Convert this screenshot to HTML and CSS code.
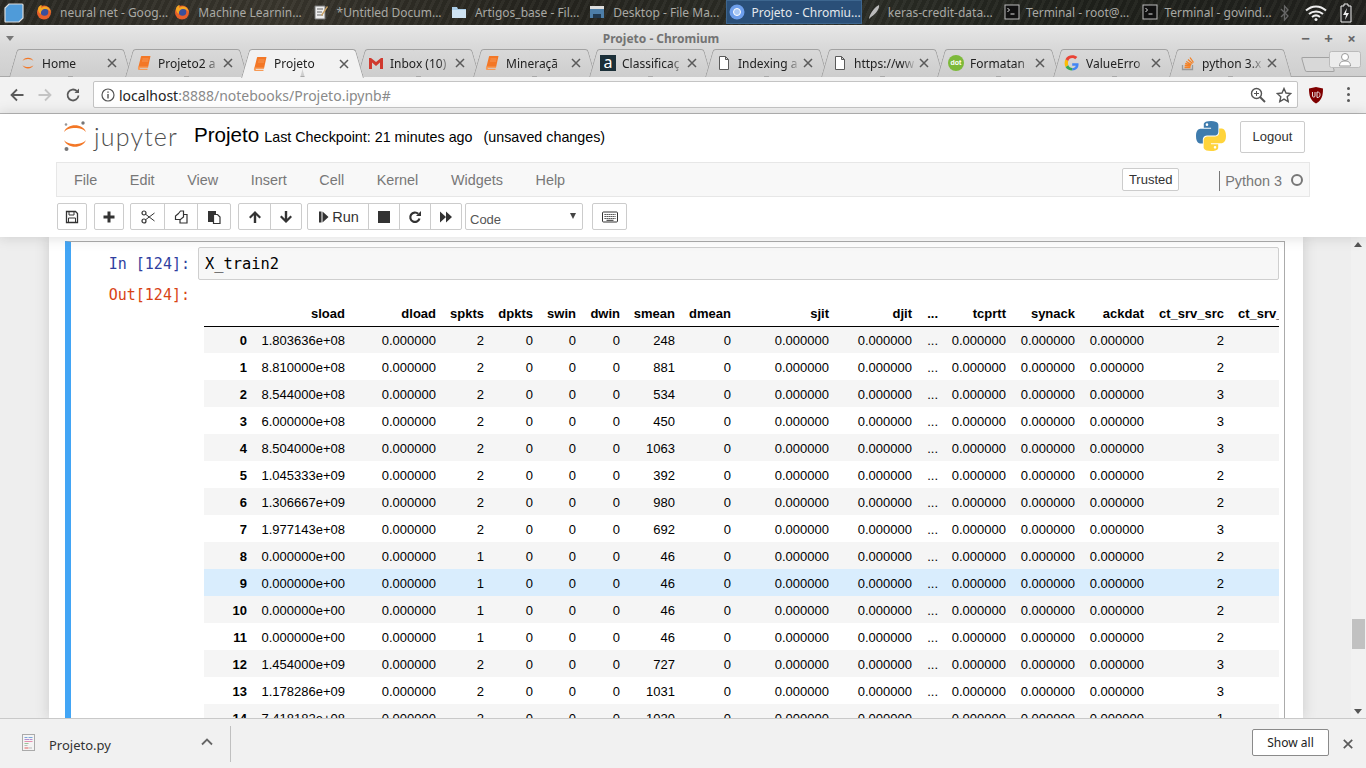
FILE: index.html
```html
<!DOCTYPE html>
<html>
<head>
  <meta charset="utf-8">
  <title>Projeto - Chromium</title>
  <link rel="stylesheet" href="styles.css">
</head>
<body>
  <svg class="defs" width="0" height="0">
    <symbol id="firefox" viewBox="0 0 16 16"><circle cx="8" cy="8.500" r="7" fill="#e8602a"/><circle cx="8.500" cy="8" r="3.800" fill="#3a4f9c"/><path d="M2 5c0-2 2-4 4-4-1 1-1 2-.5 3 1-1.500 4-2 6-1 2 1 3 3 3 5-1-2-3-3-5-3-3 0-5 2-4.500 5C3 9.500 2 7 2 5z" fill="#f5a623"/></symbol>
    <symbol id="term" viewBox="0 0 16 16"><rect x="1" y="1" width="14" height="14" fill="#111" stroke="#bbb"/><path d="M3.500 4l2 2-2 2M6.500 10h4" fill="none" stroke="#ddd"/></symbol>
    <symbol id="book" viewBox="0 0 16 16"><path d="M5 1.500c0-.3.300-.5.500-.5h9l-2.500 11.500H3.500C2.500 12.500 2 13 2 13.500z" fill="#f37726"/><path d="M2 12.500c0-.5.500-1 1.500-1H12l-.3 1.300H4.300c-.6 0-.8 1-.2 1h7.500l-.2 1.200H3c-1 0-1.300-1.500-1-2.500z" fill="#f79a55"/><path d="M6.500 4h6M6 6h6" stroke="#f9a66b" stroke-width=".7"/></symbol>
    <symbol id="page" viewBox="0 0 16 16"><path d="M3.500 1.500h6l3 3v10h-9zM9.500 1.500v3h3" fill="#fff" stroke="#5a5a5a"/></symbol>
    <symbol id="arcs" viewBox="0 0 32 32"><path d="M5 12C8 3 24 3 27 12 23 6.500 9 6.500 5 12z" fill="#f37726"/><path d="M5 20c3 9 19 9 22 0-4 5.500-18 5.500-22 0z" fill="#f37726"/></symbol>
    <symbol id="close" viewBox="0 0 10 10"><path d="M1 1l8 8M9 1L1 9" stroke="#5a5a5a" stroke-width="1.500" fill="none"/></symbol>
  </svg>

  <div class="taskbar">
    <svg class="launcher" viewBox="0 0 22 22"><path d="M6 2h13c1 0 1 0 1 1v13l-4 4H3c-1 0-1 0-1-1V6z" fill="#4f9bd9" stroke="#dcdcdc" stroke-width="1.200"/></svg>
    <div class="task-list">
      <div class="task"><svg class="task-icon"><use href="#firefox"/></svg><span>neural net - Goog...</span></div>
      <div class="task"><svg class="task-icon"><use href="#firefox"/></svg><span>Machine Learnin...</span></div>
      <div class="task"><svg class="task-icon" viewBox="0 0 16 16"><path d="M2 2h10v13H2z" fill="#eee" stroke="#777"/><path d="M4 5h6M4 8h5M4 11h6" stroke="#666"/><path d="M8 11l6-9 1 1-6 9z" fill="#c8a060"/></svg><span>*Untitled Docum...</span></div>
      <div class="task"><svg class="task-icon" viewBox="0 0 16 16"><path d="M1 3h5l1 2h8v9H1z" fill="#a9cbe6"/><path d="M1 6h14v8H1z" fill="#cfe3f2"/></svg><span>Artigos_base - Fil...</span></div>
      <div class="task"><svg class="task-icon" viewBox="0 0 16 16"><rect x="1" y="2" width="14" height="12" fill="#4d7ea8"/><rect x="1" y="2" width="14" height="3" fill="#ddd"/><rect x="4" y="10" width="8" height="4" fill="#20384e"/></svg><span>Desktop - File Ma...</span></div>
      <div class="task task-active"><svg class="task-icon" viewBox="0 0 16 16"><circle cx="8" cy="8" r="7.500" fill="#6d9eeb"/><circle cx="8" cy="8" r="3.500" fill="#a9c8f5" stroke="#fff"/></svg><span>Projeto - Chromiu...</span></div>
      <div class="task task-tight"><svg class="task-icon" viewBox="0 0 16 16"><path d="M13 1c1 3-3 9-8 12l-2 2c0-3 4-11 10-14z" fill="#bbb"/></svg><span>keras-credit-data...</span></div>
      <div class="task task-tight"><svg class="task-icon"><use href="#term"/></svg><span>Terminal - root@...</span></div>
      <div class="task task-tight"><svg class="task-icon"><use href="#term"/></svg><span>Terminal - govind...</span></div>
    </div>
    <div class="tray">
      <svg class="tray-bt" viewBox="0 0 10 18"><path d="M1 5l7 7-3.500 4V2L8 6l-7 7" fill="none" stroke="#666" stroke-width="1.300"/></svg>
      <svg class="tray-wifi" viewBox="0 0 22 16"><path d="M1 5.500c6-5.500 14-5.500 20 0M4 9c4-3.500 10-3.500 14 0M7 12c2.500-2 5.500-2 8 0" fill="none" stroke="#eee" stroke-width="2"/><circle cx="11" cy="14.500" r="1.500" fill="#eee"/></svg>
      <svg class="tray-bat" viewBox="0 0 12 20"><path d="M4 1h4v2h3v16H1V3h3z" fill="#222" stroke="#eee"/><path d="M7 5L3 12h3l-1 5 4-7H6z" fill="#eee"/></svg>
    </div>
  </div>

  <div class="browser-top">
    <div class="titlebar">
      <span class="win-menu"></span>
      <span class="win-title">Projeto - Chromium</span>
      <div class="win-controls"><span>&minus;</span><span>+</span><span>&times;</span></div>
    </div>
    <div class="tabstrip">
      <div class="tab"><svg class="tab-icon"><use href="#arcs"/></svg><span class="tab-text">Home</span><svg class="tab-close"><use href="#close"/></svg></div>
      <div class="tab"><svg class="tab-icon"><use href="#book"/></svg><span class="tab-text">Projeto2 a</span><svg class="tab-close"><use href="#close"/></svg></div>
      <div class="tab tab-active"><svg class="tab-icon"><use href="#book"/></svg><span class="tab-text">Projeto</span><svg class="tab-close"><use href="#close"/></svg></div>
      <div class="tab"><svg class="tab-icon" viewBox="0 0 16 16"><path d="M1 3h2l5 4 5-4h2v11h-3V7.500L8 11 4 7.500V14H1z" fill="#d0392e"/></svg><span class="tab-text">Inbox (10)</span><svg class="tab-close"><use href="#close"/></svg></div>
      <div class="tab"><svg class="tab-icon"><use href="#book"/></svg><span class="tab-text">Mineraçã</span><svg class="tab-close"><use href="#close"/></svg></div>
      <div class="tab"><span class="tab-icon icon-a">a</span><span class="tab-text">Classificaç</span><svg class="tab-close"><use href="#close"/></svg></div>
      <div class="tab"><svg class="tab-icon"><use href="#page"/></svg><span class="tab-text">Indexing a</span><svg class="tab-close"><use href="#close"/></svg></div>
      <div class="tab"><svg class="tab-icon"><use href="#page"/></svg><span class="tab-text">https://ww</span><svg class="tab-close"><use href="#close"/></svg></div>
      <div class="tab"><span class="tab-icon icon-dot">dot</span><span class="tab-text">Formatan</span><svg class="tab-close"><use href="#close"/></svg></div>
      <div class="tab"><svg class="tab-icon" viewBox="0 0 16 16"><path d="M14.500 8.200H8.200v2.500h3.600c-.5 1.500-1.800 2.300-3.600 2.300V15.500c2 0 3.700-.7 4.900-1.900 1.200-1.300 1.600-3.200 1.400-5.400z" fill="#4285f4"/><path d="M8.200 13c-2 0-3.400-1.200-4-2.900L1.500 12c1.200 2.200 3.700 3.500 6.700 3.500z" fill="#34a853"/><path d="M4.200 10.100c-.4-1.300-.4-2.700 0-4L1.500 4.200c-1.200 2.400-1.200 5.400 0 7.800z" fill="#fbbc05"/><path d="M8.200 3c1.200 0 2.200.4 3 1.200l2.100-2.100C12 .9 10.200.3 8.200.3 5.200.3 2.700 1.800 1.500 4.200l2.700 1.900C4.800 4.300 6.300 3 8.200 3z" fill="#ea4335"/></svg><span class="tab-text">ValueErro</span><svg class="tab-close"><use href="#close"/></svg></div>
      <div class="tab"><svg class="tab-icon" viewBox="0 0 16 16"><path d="M2.500 10v4.500h10V10" fill="none" stroke="#999" stroke-width="1.300"/><path d="M4.500 12.500h6M4.700 10.500l6 .5M5.200 8.500l5.800 1.500M6.200 6.500l5.300 3M8 4.500l4.500 4M10 2.500l3.500 5" stroke="#f48024" stroke-width="1.300"/></svg><span class="tab-text">python 3.x</span><svg class="tab-close"><use href="#close"/></svg></div>
      <div class="newtab"></div>
      <svg class="profile" viewBox="0 0 32 17"><rect x=".5" y=".5" width="31" height="16" rx="2" fill="#ececec" stroke="#bbb"/><circle cx="16" cy="6" r="3.500" fill="#fff" stroke="#999"/><path d="M10.500 15c0-4 2.500-5 5.500-5s5.500 1 5.500 5z" fill="#fff" stroke="#999"/></svg>
    </div>
    <div class="navbar">
      <svg class="nav-btn" viewBox="0 0 16 16"><path d="M14.500 8H2.500M8 2.500L2.500 8 8 13.500" fill="none" stroke="#5a5a5a" stroke-width="1.800"/></svg>
      <svg class="nav-btn" viewBox="0 0 16 16"><path d="M1.500 8h12M8 2.500L13.500 8 8 13.500" fill="none" stroke="#c4c4c4" stroke-width="1.800"/></svg>
      <svg class="nav-btn" viewBox="0 0 16 16"><path d="M13.500 8.500A5.500 5.500 0 1 1 11.800 4" fill="none" stroke="#5a5a5a" stroke-width="1.800"/><path d="M9.500 6H14V1.500z" fill="#5a5a5a"/></svg>
      <div class="omnibox">
        <svg class="info" viewBox="0 0 14 14"><circle cx="7" cy="7" r="6" fill="none" stroke="#555" stroke-width="1.200"/><path d="M7 6v4.500M7 3.500v1.300" stroke="#555" stroke-width="1.400"/></svg>
        <span class="url"><span class="url-host">localhost</span>:8888/notebooks/Projeto.ipynb#</span>
        <svg class="omni-icon" viewBox="0 0 16 16"><circle cx="6.500" cy="6.500" r="5" fill="none" stroke="#555" stroke-width="1.400"/><path d="M10 10l5 5" stroke="#555" stroke-width="2"/><path d="M4 6.500h5M6.500 4v5" stroke="#555"/></svg>
        <svg class="omni-icon" viewBox="0 0 16 16"><path d="M8 1.500l2 4.500 4.800.5-3.600 3.200 1 4.800L8 12.100l-4.200 2.400 1-4.800L1.200 6.500 6 6z" fill="none" stroke="#555" stroke-width="1.400"/></svg>
      </div>
      <svg class="ublock" viewBox="0 0 16 18"><path d="M1 2.500L8 1l7 1.500c0 7-1 11.500-7 15-6-3.500-7-8-7-15z" fill="#800000"/><path d="M4.500 6v4c0 1.500 2.500 1.500 2.500 0V6M9 6v5.500c2.500 0 3-1 3-2.700S11.500 6 9 6z" fill="none" stroke="#e8dcdc"/></svg>
      <div class="kebab"><i></i><i></i><i></i></div>
    </div>
  </div>

  <div class="jp-top">
    <div class="jp-header">
      <svg class="jp-logo" viewBox="0 0 26 32"><use href="#arcs" x="-3" y="0" width="32" height="32"/><circle cx="21" cy="3" r="1.700" fill="#767677"/><circle cx="4" cy="4.500" r="1.300" fill="#989798"/><circle cx="4.500" cy="29" r="2" fill="#767677"/></svg>
      <span class="jp-word">jupyter</span>
      <span class="nb-name">Projeto</span>
      <span class="nb-check">Last Checkpoint: 21 minutes ago</span>
      <span class="nb-unsaved">(unsaved changes)</span>
      <svg class="py-logo" viewBox="0 0 110 110"><path d="M54.900 0C26.900 0 28.600 12.200 28.600 12.200v12.600h26.700v3.800H18S0 26.500 0 54.900c0 28.400 15.700 27.400 15.700 27.400h9.400V69.100s-.5-15.700 15.400-15.700h26.600s14.900.2 14.900-14.400V14.800S84.300 0 54.900 0zM40.200 8.500a4.800 4.800 0 1 1 0 9.600 4.800 4.800 0 0 1 0-9.600z" fill="#3f7cad"/><path transform="rotate(180 55 55)" d="M54.900 0C26.900 0 28.600 12.200 28.600 12.200v12.600h26.700v3.800H18S0 26.500 0 54.900c0 28.400 15.700 27.400 15.700 27.400h9.400V69.100s-.5-15.700 15.400-15.700h26.600s14.900.2 14.900-14.400V14.800S84.300 0 54.900 0zM40.200 8.500a4.800 4.800 0 1 1 0 9.600 4.800 4.800 0 0 1 0-9.600z" fill="#ffd43b"/></svg>
      <div class="logout">Logout</div>
    </div>
    <div class="jp-menubar">
      <span class="menu-item">File</span>
      <span class="menu-item">Edit</span>
      <span class="menu-item">View</span>
      <span class="menu-item">Insert</span>
      <span class="menu-item">Cell</span>
      <span class="menu-item">Kernel</span>
      <span class="menu-item">Widgets</span>
      <span class="menu-item">Help</span>
      <span class="trusted">Trusted</span>
      <span class="kernel-name">Python 3</span>
      <span class="kernel-dot"></span>
    </div>
    <div class="jp-toolbar">
      <div class="btn-group">
        <div class="tb-btn"><svg viewBox="0 0 14 14"><path d="M1.500 1.500h9l2 2v9h-11z" fill="none" stroke="#333" stroke-width="1.300"/><path d="M4 1.500h5v3.500H4zM3.500 8h7v4.500h-7z" fill="none" stroke="#333"/></svg></div>
      </div>
      <div class="btn-group group-plus">
        <div class="tb-btn"><svg viewBox="0 0 14 14"><path d="M7 1.500v11M1.500 7h11" stroke="#333" stroke-width="3"/></svg></div>
      </div>
      <div class="btn-group">
        <div class="tb-btn tb-wide"><svg viewBox="0 0 14 14"><circle cx="3" cy="3" r="2" fill="none" stroke="#333" stroke-width="1.200"/><circle cx="3" cy="11" r="2" fill="none" stroke="#333" stroke-width="1.200"/><path d="M4.500 4.200L13.500 11M4.500 9.800L13.500 3" stroke="#333"/></svg></div>
        <div class="tb-btn tb-wide"><svg viewBox="0 0 14 14"><path d="M4.500 3.500l2-2.500h3v6l-3 2.500h-5V6z" fill="none" stroke="#333" stroke-width="1.200"/><path d="M9 4.500h4v8.500H6V9.500" fill="none" stroke="#333" stroke-width="1.200"/></svg></div>
        <div class="tb-btn tb-wide"><svg viewBox="0 0 14 14"><path d="M1 1h8v3H6v8H1z" fill="#333"/><path d="M6.500 4.500h4l2.500 2.500v6.500H6.500z" fill="#fff" stroke="#333" stroke-width="1.200"/></svg></div>
      </div>
      <div class="btn-group group-move">
        <div class="tb-btn tb-mid"><svg viewBox="0 0 14 14"><path d="M7 1l6 6-1.500 1.500L8.200 5.200V13H5.800V5.200L2.500 8.500 1 7z" fill="#333"/></svg></div>
        <div class="tb-btn tb-mid"><svg viewBox="0 0 14 14"><path d="M7 13L1 7l1.500-1.500 3.300 3.300V1h2.400v7.800l3.300-3.300L13 7z" fill="#333"/></svg></div>
      </div>
      <div class="btn-group group-run">
        <div class="tb-btn tb-run"><svg viewBox="0 0 14 14"><path d="M2 1.500h2.500v11H2zM5.500 1.500l6 5.500-6 5.500z" fill="#333"/></svg><span>Run</span></div>
        <div class="tb-btn tb-mid"><svg viewBox="0 0 14 14"><rect x="1" y="1" width="12" height="12" fill="#333"/></svg></div>
        <div class="tb-btn tb-mid"><svg viewBox="0 0 14 14"><path d="M11.500 8.500a4.700 4.700 0 1 1-1.300-4.700" fill="none" stroke="#333" stroke-width="2.200"/><path d="M8 6h5V1z" fill="#333"/></svg></div>
        <div class="tb-btn tb-mid"><svg viewBox="0 0 14 14"><path d="M1 1.500l6 5.500-6 5.500zM7 1.500l6 5.500-6 5.500z" fill="#333"/></svg></div>
      </div>
      <div class="cell-type">Code<span class="caret"></span></div>
      <div class="btn-group">
        <div class="tb-btn tb-kbd"><svg viewBox="0 0 16 12"><rect x=".5" y="1" width="15" height="10" rx="1" fill="none" stroke="#333"/><path d="M2.500 3.500h11M2.500 5.500h11M2.500 7.500h11" stroke="#333" stroke-dasharray="1.300 .7"/><path d="M4.500 9.300h7" stroke="#333"/></svg></div>
      </div>
    </div>
  </div>

  <div class="site">
    <div class="notebook">
      <div class="cell">
        <div class="input-row">
          <div class="prompt prompt-in">In [124]:</div>
          <div class="input-box">X_train2</div>
        </div>
        <div class="output-row">
          <div class="prompt prompt-out">Out[124]:</div>
          <div class="df-wrap">
            <table class="df">
              <colgroup>
                <col class="w49"><col class="w98"><col class="w91"><col class="w48"><col class="w49"><col class="w43"><col class="w44"><col class="w55"><col class="w56"><col class="w98"><col class="w83"><col class="w26"><col class="w68"><col class="w69"><col class="w69"><col class="w80"><col class="w79">
              </colgroup>
              <thead>
                <tr><th></th><th>sload</th><th>dload</th><th>spkts</th><th>dpkts</th><th>swin</th><th>dwin</th><th>smean</th><th>dmean</th><th>sjit</th><th>djit</th><th>...</th><th>tcprtt</th><th>synack</th><th>ackdat</th><th>ct_srv_src</th><th>ct_srv_dst</th></tr>
              </thead>
              <tbody>
                <tr><th>0</th><td>1.803636e+08</td><td>0.000000</td><td>2</td><td>0</td><td>0</td><td>0</td><td>248</td><td>0</td><td>0.000000</td><td>0.000000</td><td>...</td><td>0.000000</td><td>0.000000</td><td>0.000000</td><td>2</td><td></td></tr>
                <tr><th>1</th><td>8.810000e+08</td><td>0.000000</td><td>2</td><td>0</td><td>0</td><td>0</td><td>881</td><td>0</td><td>0.000000</td><td>0.000000</td><td>...</td><td>0.000000</td><td>0.000000</td><td>0.000000</td><td>2</td><td></td></tr>
                <tr><th>2</th><td>8.544000e+08</td><td>0.000000</td><td>2</td><td>0</td><td>0</td><td>0</td><td>534</td><td>0</td><td>0.000000</td><td>0.000000</td><td>...</td><td>0.000000</td><td>0.000000</td><td>0.000000</td><td>3</td><td></td></tr>
                <tr><th>3</th><td>6.000000e+08</td><td>0.000000</td><td>2</td><td>0</td><td>0</td><td>0</td><td>450</td><td>0</td><td>0.000000</td><td>0.000000</td><td>...</td><td>0.000000</td><td>0.000000</td><td>0.000000</td><td>3</td><td></td></tr>
                <tr><th>4</th><td>8.504000e+08</td><td>0.000000</td><td>2</td><td>0</td><td>0</td><td>0</td><td>1063</td><td>0</td><td>0.000000</td><td>0.000000</td><td>...</td><td>0.000000</td><td>0.000000</td><td>0.000000</td><td>3</td><td></td></tr>
                <tr><th>5</th><td>1.045333e+09</td><td>0.000000</td><td>2</td><td>0</td><td>0</td><td>0</td><td>392</td><td>0</td><td>0.000000</td><td>0.000000</td><td>...</td><td>0.000000</td><td>0.000000</td><td>0.000000</td><td>2</td><td></td></tr>
                <tr><th>6</th><td>1.306667e+09</td><td>0.000000</td><td>2</td><td>0</td><td>0</td><td>0</td><td>980</td><td>0</td><td>0.000000</td><td>0.000000</td><td>...</td><td>0.000000</td><td>0.000000</td><td>0.000000</td><td>2</td><td></td></tr>
                <tr><th>7</th><td>1.977143e+08</td><td>0.000000</td><td>2</td><td>0</td><td>0</td><td>0</td><td>692</td><td>0</td><td>0.000000</td><td>0.000000</td><td>...</td><td>0.000000</td><td>0.000000</td><td>0.000000</td><td>3</td><td></td></tr>
                <tr><th>8</th><td>0.000000e+00</td><td>0.000000</td><td>1</td><td>0</td><td>0</td><td>0</td><td>46</td><td>0</td><td>0.000000</td><td>0.000000</td><td>...</td><td>0.000000</td><td>0.000000</td><td>0.000000</td><td>2</td><td></td></tr>
                <tr class="row-hover"><th>9</th><td>0.000000e+00</td><td>0.000000</td><td>1</td><td>0</td><td>0</td><td>0</td><td>46</td><td>0</td><td>0.000000</td><td>0.000000</td><td>...</td><td>0.000000</td><td>0.000000</td><td>0.000000</td><td>2</td><td></td></tr>
                <tr><th>10</th><td>0.000000e+00</td><td>0.000000</td><td>1</td><td>0</td><td>0</td><td>0</td><td>46</td><td>0</td><td>0.000000</td><td>0.000000</td><td>...</td><td>0.000000</td><td>0.000000</td><td>0.000000</td><td>2</td><td></td></tr>
                <tr><th>11</th><td>0.000000e+00</td><td>0.000000</td><td>1</td><td>0</td><td>0</td><td>0</td><td>46</td><td>0</td><td>0.000000</td><td>0.000000</td><td>...</td><td>0.000000</td><td>0.000000</td><td>0.000000</td><td>2</td><td></td></tr>
                <tr><th>12</th><td>1.454000e+09</td><td>0.000000</td><td>2</td><td>0</td><td>0</td><td>0</td><td>727</td><td>0</td><td>0.000000</td><td>0.000000</td><td>...</td><td>0.000000</td><td>0.000000</td><td>0.000000</td><td>3</td><td></td></tr>
                <tr><th>13</th><td>1.178286e+09</td><td>0.000000</td><td>2</td><td>0</td><td>0</td><td>0</td><td>1031</td><td>0</td><td>0.000000</td><td>0.000000</td><td>...</td><td>0.000000</td><td>0.000000</td><td>0.000000</td><td>3</td><td></td></tr>
                <tr><th>14</th><td>7.418182e+08</td><td>0.000000</td><td>2</td><td>0</td><td>0</td><td>0</td><td>1020</td><td>0</td><td>0.000000</td><td>0.000000</td><td>...</td><td>0.000000</td><td>0.000000</td><td>0.000000</td><td>1</td><td></td></tr>
              </tbody>
            </table>
          </div>
        </div>
      </div>
    </div>
    <div class="scrollbar">
      <span class="sb-up"></span>
      <span class="sb-thumb"></span>
      <span class="sb-down"></span>
    </div>
  </div>

  <div class="downloads">
    <svg class="dl-file" viewBox="0 0 13 17"><rect x=".5" y=".5" width="12" height="16" fill="#f4f4f4" stroke="#aaa"/><path d="M2.500 3.500h3M6.500 3.500h4" stroke="#7aa7d9"/><path d="M2.500 5.500h5M8 5.500h2.500" stroke="#b08fd0"/><path d="M2.500 7.500h8" stroke="#e58fb0"/><path d="M2.500 9.500h4" stroke="#9ac49a"/><path d="M2.500 11.500h3" stroke="#bbb"/><path d="M2.500 14h4" stroke="#e06060"/><path d="M7 14h3" stroke="#bbb"/></svg>
    <span class="dl-name">Projeto.py</span>
    <svg class="dl-chevron" viewBox="0 0 12 8"><path d="M1 6.500l5-5 5 5" fill="none" stroke="#666" stroke-width="1.800"/></svg>
    <span class="dl-sep"></span>
    <div class="show-all">Show all</div>
    <svg class="dl-close" viewBox="0 0 10 10"><path d="M.8.800l8.400 8.400M9.200.800L.8 9.200" stroke="#5a5a5a" stroke-width="1.700"/></svg>
  </div>
</body>
</html>
```

FILE: styles.css
```css
* {
  box-sizing: border-box;
}

html, body {
  margin: 0;
  height: 100%;
}

body {
  width: 1366px;
  height: 768px;
  overflow: hidden;
  display: flex;
  flex-direction: column;
  font-family: "Liberation Sans", Arial, sans-serif;
  background: #eee;
}

.defs {
  position: absolute;
}

/* Desktop panel */
.taskbar {
  height: 25px;
  flex: none;
  display: flex;
  align-items: center;
  padding-left: 3px;
  background:
    repeating-linear-gradient(115deg, rgba(255, 255, 255, 0.03) 0 3px, rgba(0, 0, 0, 0.08) 3px 7px),
    linear-gradient(90deg, #2b2a24, #3a372e 20%, #26251f 40%, #2e3029 60%, #20221c 80%, #23231f);
  font-family: "Noto Sans", sans-serif;
  font-size: 12px;
  color: #a9a9a4;
}

.launcher {
  width: 22px;
  height: 22px;
  flex: none;
}

.task-list {
  display: flex;
  margin-left: 10px;
  height: 25px;
}

.task {
  width: 136px;
  margin-right: 2.300px;
  height: 24px;
  padding-left: 1px;
  display: flex;
  align-items: center;
  gap: 8px;
  white-space: nowrap;
}

.task-active {
  background: #2a4f78;
  border: 1px solid #3d668f;
  color: #e4e8ec;
  padding-left: 2px;
  gap: 6px;
}

.task-tight {
  gap: 6px;
}

.task-icon {
  width: 16px;
  height: 16px;
  flex: none;
}

.tray {
  margin-left: auto;
  display: flex;
  align-items: center;
  height: 25px;
  padding-right: 14px;
}

.tray-bt {
  width: 10px;
  height: 18px;
  margin-right: 15px;
}

.tray-wifi {
  width: 22px;
  height: 16px;
  margin-right: 13px;
}

.tray-bat {
  width: 12px;
  height: 20px;
}

/* Browser chrome */
.browser-top {
  flex: none;
  font-family: "Noto Sans", sans-serif;
}

.titlebar {
  height: 24px;
  position: relative;
  display: flex;
  align-items: center;
  justify-content: center;
  padding: 2px 44px 0 0;
  background: linear-gradient(#e6e6e6, #d8d8d8);
  border-top: 1px solid #efefef;
}

.win-menu {
  position: absolute;
  left: 6px;
  top: 10px;
  border-left: 4px solid transparent;
  border-right: 4px solid transparent;
  border-top: 5px solid #777;
}

.win-title {
  font-size: 12px;
  font-weight: 700;
  color: #737373;
}

.win-controls {
  position: absolute;
  right: 3px;
  top: 2px;
  display: flex;
  color: #666;
  font-size: 15px;
  line-height: 20px;
  font-weight: 700;
}

.win-controls span {
  width: 23px;
  text-align: center;
}

.tabstrip {
  height: 28px;
  display: flex;
  padding-left: 13px;
  position: relative;
  background: linear-gradient(#d8d8d8, #cfcfcf);
  border-bottom: 1px solid #a9a9a9;
}

.tab {
  width: 116px;
  height: 28px;
  flex: none;
  position: relative;
  z-index: 1;
  display: flex;
  align-items: center;
  padding-left: 7px;
  font-size: 12px;
  color: #222;
}

.tab::before,
.tab::after {
  content: "";
  position: absolute;
  top: 0;
  bottom: 0;
  width: 50%;
  z-index: -1;
  background: linear-gradient(#d9d9d9, #cdcdcd);
  border-top: 1px solid #a2a2a2;
}

.tab::before {
  left: -4px;
  border-left: 1px solid #a2a2a2;
  border-top-left-radius: 3px;
  transform: skewX(-16deg);
  transform-origin: bottom left;
}

.tab::after {
  right: -3px;
  border-right: 1px solid #a2a2a2;
  border-top-right-radius: 3px;
  transform: skewX(16deg);
  transform-origin: bottom right;
}

.tab-active {
  z-index: 2;
  height: 29px;
  margin-bottom: -1px;
}

.tab-active::before,
.tab-active::after {
  background: #f2f2f2;
}

.tab-icon {
  width: 16px;
  height: 16px;
  flex: none;
}

.tab-text {
  width: 62px;
  margin-left: 6px;
  overflow: hidden;
  white-space: nowrap;
  -webkit-mask-image: linear-gradient(90deg, #000 78%, transparent);
  mask-image: linear-gradient(90deg, #000 78%, transparent);
}

.tab-close {
  width: 10px;
  height: 10px;
  flex: none;
  margin-left: 3px;
}

.icon-a {
  background: #1b2f38;
  color: #fff;
  font: 400 16px/15px "Noto Sans", sans-serif;
  text-align: center;
}

.icon-dot {
  border-radius: 50%;
  background: #7db93a;
  color: #fff;
  font: 700 7px/16px "Liberation Sans", sans-serif;
  text-align: center;
}

.newtab {
  width: 30px;
  height: 15px;
  margin: 8px 0 0 14px;
  background: #d8d8d8;
  border: 1px solid #a2a2a2;
  border-radius: 2px;
  transform: skewX(16deg);
}

.profile {
  position: absolute;
  right: 5px;
  top: 2px;
  width: 32px;
  height: 17px;
}

.navbar {
  height: 37px;
  display: flex;
  align-items: center;
  padding: 0 0 1px 9px;
  background: #f2f2f2;
  border-bottom: 1px solid #b5b5b5;
}

.nav-btn {
  width: 16px;
  height: 16px;
  flex: none;
  margin-right: 12px;
}

.omnibox {
  width: 1205px;
  height: 27px;
  display: flex;
  align-items: center;
  background: #fff;
  border: 1px solid #c4c4c4;
  border-radius: 2px;
  padding: 0 5px 0 7px;
  font-size: 14px;
  color: #8a8a8a;
}

.info {
  width: 14px;
  height: 14px;
  flex: none;
}

.url {
  margin-left: 4px;
  margin-right: auto;
  padding-top: 1px;
  white-space: nowrap;
}

.url-host {
  color: #222;
}

.omni-icon {
  width: 16px;
  height: 16px;
  margin-left: 10px;
}

.ublock {
  width: 16px;
  height: 18px;
  margin-left: 10px;
}

.kebab {
  display: flex;
  flex-direction: column;
  gap: 3px;
  margin-left: 23px;
}

.kebab i {
  width: 3px;
  height: 3px;
  border-radius: 50%;
  background: #5a5a5a;
}

/* Notebook header */
.jp-top {
  flex: none;
  height: 123px;
  background: #fff;
  position: relative;
  z-index: 3;
  box-shadow: 0 0 12px 1px rgba(87, 87, 87, 0.2);
}

.jp-header {
  height: 48px;
  display: flex;
  align-items: center;
  padding: 0 61px 5px 62px;
  color: #000;
}

.jp-logo {
  width: 26px;
  height: 32px;
  flex: none;
  margin-top: 1px;
}

.jp-word {
  margin-left: 6px;
  width: 94px;
  font-family: Lato, sans-serif;
  font-size: 25px;
  font-weight: 300;
  letter-spacing: 1.200px;
  color: #4e4e4e;
  line-height: 30px;
}

.nb-name {
  margin-left: 6px;
  margin-bottom: 2px;
  font-size: 20.600px;
}

.nb-check {
  margin-left: 5px;
  font-size: 14.300px;
  padding-top: 3px;
}

.nb-unsaved {
  margin-left: 11px;
  font-size: 14.300px;
  padding-top: 3px;
}

.py-logo {
  width: 30px;
  height: 32px;
  margin-left: auto;
  margin-top: 1px;
  flex: none;
}

.logout {
  width: 65px;
  height: 32px;
  margin-left: 14px;
  margin-top: 3px;
  border: 1px solid #ccc;
  border-radius: 2px;
  text-align: center;
  font-size: 13px;
  line-height: 30px;
  color: #333;
}

.jp-menubar {
  width: 1254px;
  height: 35px;
  margin-left: 56px;
  padding-left: 17px;
  display: flex;
  align-items: center;
  background: #f8f8f8;
  border: 1px solid #e7e7e7;
  font-size: 14.400px;
  color: #777;
}

.menu-item {
  margin-right: 32.600px;
}

.trusted {
  margin-left: auto;
  width: 57px;
  height: 23px;
  border: 1px solid #ccc;
  border-radius: 2px;
  background: #fff;
  font-size: 13px;
  line-height: 21px;
  text-align: center;
  color: #333;
}

.kernel-name {
  margin-left: 40px;
  padding-left: 5px;
  height: 20px;
  margin-top: 2px;
  line-height: 20px;
  border-left: 1px solid #777;
}

.kernel-dot {
  width: 12px;
  height: 12px;
  margin: 1px 6px 0 9px;
  border: 2px solid #777;
  border-radius: 50%;
}

.jp-toolbar {
  height: 40px;
  margin-left: 57px;
  padding-top: 6px;
  display: flex;
  align-items: flex-start;
  gap: 6px;
}

.btn-group {
  display: flex;
  height: 27px;
  border: 1px solid #ccc;
  border-radius: 2px;
  background: #fff;
}

.group-plus,
.group-move {
  margin-left: 1px;
}

.group-run {
  margin-left: -1px;
}

.tb-btn {
  width: 28px;
  display: flex;
  align-items: center;
  justify-content: center;
  gap: 1px;
  font-size: 14.500px;
  color: #333;
  border-left: 1px solid #ccc;
}

.tb-btn:first-child {
  border-left: 0;
}

.tb-btn svg {
  width: 14px;
  height: 14px;
  flex: none;
}

.tb-wide {
  width: 33px;
}

.tb-mid {
  width: 31px;
}

.tb-run {
  width: 60px;
}

.tb-kbd {
  width: 33px;
}

.tb-kbd svg {
  width: 16px;
  height: 12px;
}

.cell-type {
  width: 118px;
  height: 27px;
  margin-left: -3px;
  margin-right: 3px;
  position: relative;
  border: 1px solid #ccc;
  border-radius: 2px;
  background: #fff;
  padding: 2px 0 0 4px;
  font-size: 13px;
  line-height: 27px;
  color: #555;
}

.caret {
  position: absolute;
  right: 6px;
  top: 9px;
  border-left: 3px solid transparent;
  border-right: 3px solid transparent;
  border-top: 6px solid #444;
}

/* Notebook body */
.site {
  flex: 1;
  min-height: 0;
  position: relative;
  display: flex;
  overflow: hidden;
  background: #eee;
}

.notebook {
  width: 1254px;
  margin-left: 49px;
  padding: 4px 18px 0 16px;
  background: #fff;
  box-shadow: 0 0 12px 1px rgba(87, 87, 87, 0.2);
}

.cell {
  border: 1px solid #ababab;
  border-left: 6px solid #42a5f5;
  padding: 5px 5px 20px 5px;
  border-bottom: 0;
}

.input-row,
.output-row {
  display: flex;
}

.prompt {
  width: 122px;
  flex: none;
  padding-right: 8px;
  text-align: right;
  font-family: "DejaVu Sans Mono", monospace;
  font-size: 15px;
}

.prompt-in {
  color: #303f9f;
  line-height: 35px;
  height: 33px;
}

.prompt-out {
  color: #d84315;
  line-height: 20px;
  padding-top: 5px;
}

.input-box {
  flex: 1;
  height: 33px;
  padding-left: 6px;
  background: #f7f7f7;
  border: 1px solid #cfcfcf;
  border-radius: 2px;
  font-family: "DejaVu Sans Mono", monospace;
  font-size: 15.400px;
  line-height: 33px;
  color: #000;
}

.df-wrap {
  width: 1075px;
  margin: 20px 0 0 6px;
  overflow: hidden;
}

.df {
  table-layout: fixed;
  width: 1077px;
  border-collapse: collapse;
  font-size: 13px;
  color: #000;
}

.df th,
.df td {
  padding: 1px 6px 0;
  text-align: right;
  white-space: nowrap;
  height: 27px;
  font-weight: 400;
}

.df th {
  font-weight: 700;
}

.df thead tr {
  border-bottom: 1px solid #000;
}

.df thead th {
  height: 26px;
}

.df tbody tr:nth-child(odd) {
  background: #f5f5f5;
}

.df tbody tr.row-hover {
  background: #d9edfd;
}

.w26 { width: 26px; }
.w43 { width: 43px; }
.w44 { width: 44px; }
.w48 { width: 48px; }
.w49 { width: 49px; }
.w55 { width: 55px; }
.w56 { width: 56px; }
.w68 { width: 68px; }
.w69 { width: 69px; }
.w79 { width: 79px; }
.w80 { width: 80px; }
.w83 { width: 83px; }
.w91 { width: 91px; }
.w98 { width: 98px; }

.scrollbar {
  position: absolute;
  right: 0;
  top: 0;
  bottom: 0;
  width: 15px;
  background: #f1f1f1;
}

.sb-up,
.sb-down {
  position: absolute;
  left: 3px;
  border-left: 4.500px solid transparent;
  border-right: 4.500px solid transparent;
}

.sb-up {
  top: 5px;
  border-bottom: 5px solid #555;
}

.sb-down {
  bottom: 4px;
  border-top: 5px solid #555;
}

.sb-thumb {
  position: absolute;
  left: 1px;
  right: 1px;
  top: 382px;
  height: 30px;
  background: #c1c1c1;
}

/* Download shelf */
.downloads {
  flex: none;
  height: 50px;
  position: relative;
  z-index: 3;
  display: flex;
  align-items: center;
  padding-left: 22px;
  background: #f1f1f1;
  border-top: 1px solid #c9c9c9;
  font-family: "Noto Sans", sans-serif;
}

.dl-file {
  width: 13px;
  height: 17px;
  margin-bottom: 3px;
}

.dl-name {
  margin-left: 14px;
  width: 152px;
  padding-top: 3px;
  font-size: 13px;
  color: #333;
}

.dl-chevron {
  width: 12px;
  height: 8px;
  margin-bottom: 3px;
}

.dl-sep {
  width: 1px;
  height: 36px;
  margin-left: 17px;
  background: #c0c0c0;
}

.show-all {
  width: 77px;
  height: 27px;
  margin-left: auto;
  margin-bottom: 2px;
  border: 1px solid #8a8a8a;
  border-radius: 2px;
  background: #fff;
  text-align: center;
  font-size: 12px;
  line-height: 25px;
  color: #222;
}

.dl-close {
  width: 10px;
  height: 10px;
  margin: 0 13px 0 14px;
}
```
